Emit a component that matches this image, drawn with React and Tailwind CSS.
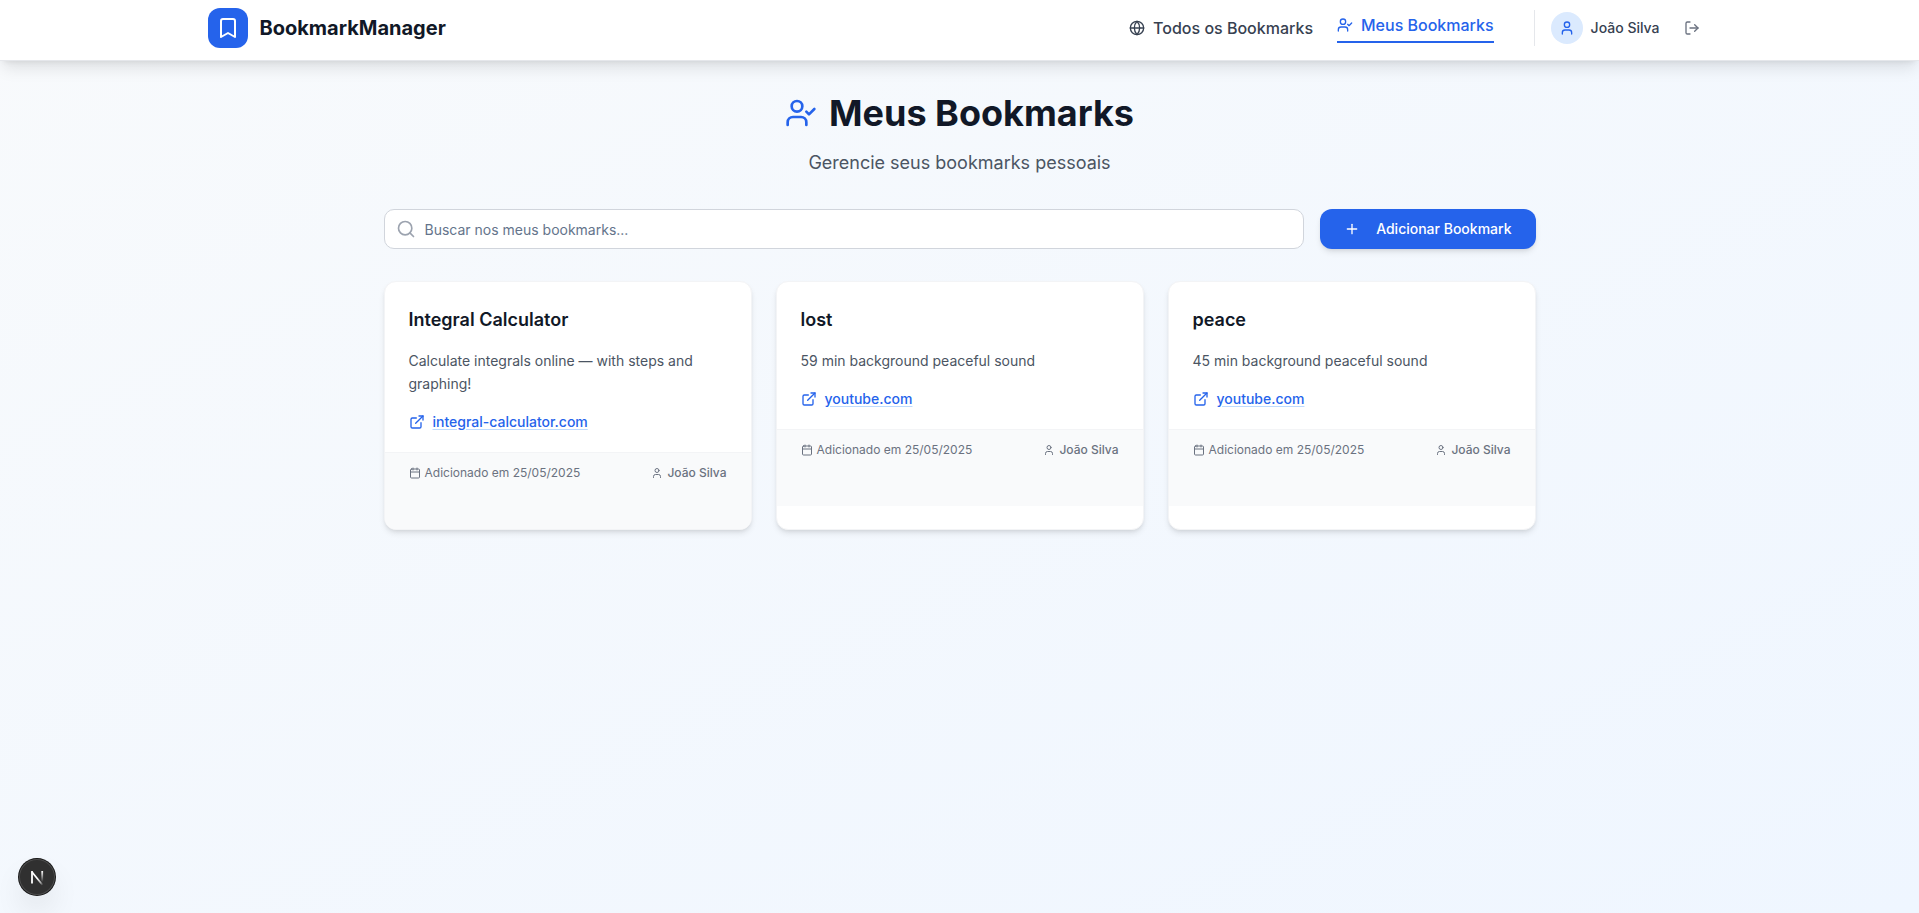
import React from "react";
import {
  Bookmark,
  Calendar,
  ExternalLink,
  Globe,
  LogOut,
  Plus,
  Search,
  User,
  UserCheck,
} from "lucide-react";

const bookmarks = [
  {
    title: "Integral Calculator",
    description: "Calculate integrals online — with steps and graphing!",
    host: "integral-calculator.com",
    date: "25/05/2025",
    owner: "João Silva",
  },
  {
    title: "lost",
    description: "59 min background peaceful sound",
    host: "youtube.com",
    date: "25/05/2025",
    owner: "João Silva",
  },
  {
    title: "peace",
    description: "45 min background peaceful sound",
    host: "youtube.com",
    date: "25/05/2025",
    owner: "João Silva",
  },
];

function Header() {
  return (
    <header className="border-b border-gray-200 bg-white shadow-lg">
      <div className="mx-auto flex max-w-[1536px] items-center justify-between px-4 pt-2 pb-3">
        <a href="#" className="flex items-center gap-3">
          <span className="flex size-10 items-center justify-center rounded-xl bg-[#2563eb] text-white">
            <Bookmark size={24} aria-hidden="true" />
          </span>
          <span className="text-xl font-bold text-[#111827]">BookmarkManager</span>
        </a>
        <nav className="flex items-center gap-6">
          <a href="#" className="flex items-center gap-2 font-medium text-[#374151]">
            <Globe size={16} aria-hidden="true" />
            Todos os Bookmarks
          </a>
          <a
            href="#"
            aria-current="page"
            className="flex items-center gap-2 border-b-2 border-[#2563eb] pb-1 font-medium text-[#2563eb]"
          >
            <UserCheck size={16} aria-hidden="true" />
            Meus Bookmarks
          </a>
          <div className="ml-4 flex h-9 items-center gap-3 border-l border-gray-200 pl-4">
            <div className="flex items-center gap-2">
              <span className="flex size-8 items-center justify-center rounded-full bg-[#dbeafe] text-[#2563eb]">
                <User size={16} aria-hidden="true" />
              </span>
              <span className="text-sm font-medium text-[#374151]">João Silva</span>
            </div>
            <button type="button" aria-label="Sair" className="flex h-9 items-center px-3 text-[#6b7280]">
              <LogOut size={16} aria-hidden="true" />
            </button>
          </div>
        </nav>
      </div>
    </header>
  );
}

function BookmarkCard({ title, description, host, date, owner }) {
  return (
    <article className="overflow-hidden rounded-xl border border-gray-100 bg-white shadow-md">
      <div className="px-6 pt-6 pb-5">
        <h2 className="text-lg leading-7 font-semibold text-[#111827]">{title}</h2>
        <p className="mt-4 text-sm leading-relaxed text-[#4b5563]">{description}</p>
        <a href="#" className="mt-4 flex items-center gap-2 text-sm font-medium text-[#2563eb]">
          <ExternalLink size={16} aria-hidden="true" />
          <span className="underline decoration-[#bfdbfe] underline-offset-2">{host}</span>
        </a>
      </div>
      <footer className="flex justify-between border-t border-gray-100 bg-[#f9fafb] px-6 pt-3 pb-12 text-xs text-[#6b7280]">
        <span className="flex items-center gap-1">
          <Calendar size={12} aria-hidden="true" />
          Adicionado em {date}
        </span>
        <span className="flex items-center gap-1 font-medium">
          <User size={12} aria-hidden="true" />
          {owner}
        </span>
      </footer>
    </article>
  );
}

function DevToolsBadge() {
  return (
    <button
      type="button"
      aria-label="Next.js"
      className="fixed bottom-[18px] left-[19px] flex size-9 items-center justify-center rounded-full bg-[#303030] shadow-[0_0_0_1px_#171717,inset_0_0_0_1px_rgba(255,255,255,0.14),0_16px_32px_-8px_rgba(0,0,0,0.24)]"
    >
      <svg className="shrink-0" width="40" height="40" viewBox="0 0 40 40" fill="none" aria-hidden="true">
        <defs>
          <linearGradient id="diag" x1="21" y1="21" x2="26" y2="28" gradientUnits="userSpaceOnUse">
            <stop stopColor="white" />
            <stop offset="0.6" stopColor="white" stopOpacity="0.6" />
            <stop offset="1" stopColor="white" stopOpacity="0" />
          </linearGradient>
          <linearGradient id="stem" x1="25" y1="14" x2="25" y2="25" gradientUnits="userSpaceOnUse">
            <stop stopColor="white" />
            <stop offset="1" stopColor="white" stopOpacity="0" />
          </linearGradient>
        </defs>
        <path d="M15 15L25.5 28" stroke="url(#diag)" strokeWidth="1.8" />
        <path d="M15 26.5V14" stroke="white" strokeWidth="1.8" />
        <path d="M25.2 14V25.5" stroke="url(#stem)" strokeWidth="1.8" />
      </svg>
    </button>
  );
}

export default function App() {
  return (
    <div className="min-h-screen bg-linear-to-br from-[#f8fafc] to-[#eff6ff] font-['Inter',sans-serif]">
      <Header />
      <main className="mx-auto max-w-[1184px] px-4 py-8">
        <h1 className="flex items-center justify-center gap-3 text-4xl font-bold text-[#111827]">
          <UserCheck size={32} className="text-[#2563eb]" aria-hidden="true" />
          Meus Bookmarks
        </h1>
        <p className="mt-4 text-center text-lg leading-7 text-[#4b5563]">
          Gerencie seus bookmarks pessoais
        </p>
        <div className="mt-8 flex gap-4">
          <div className="relative flex-1">
            <Search
              size={20}
              className="absolute top-1/2 left-3 -translate-y-1/2 text-[#9ca3af]"
              aria-hidden="true"
            />
            <input
              type="search"
              aria-label="Buscar nos meus bookmarks"
              placeholder="Buscar nos meus bookmarks..."
              className="h-10 w-full rounded-[10px] border border-gray-300 bg-white pr-3 pl-10 text-sm text-[#111827] placeholder:text-[#64748b]"
            />
          </div>
          <button
            type="button"
            className="flex h-10 items-center gap-4 rounded-xl bg-[#2563eb] px-6 text-sm font-medium text-white shadow-md"
          >
            <Plus size={16} aria-hidden="true" />
            Adicionar Bookmark
          </button>
        </div>
        <section aria-label="Bookmarks" className="mt-8 grid grid-cols-3 gap-6">
          {bookmarks.map((bookmark) => (
            <BookmarkCard key={bookmark.title} {...bookmark} />
          ))}
        </section>
      </main>
      <DevToolsBadge />
    </div>
  );
}
